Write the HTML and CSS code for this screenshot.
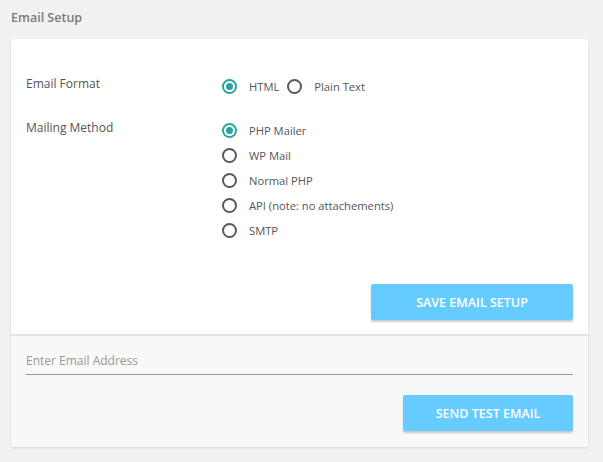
FILE: index.html
```html
<!DOCTYPE html>
<html>
<head>
<meta charset="utf-8">
<link rel="stylesheet" href="styles.css">
</head>
<body>
<div class="page">
  <h2 class="title">Email Setup</h2>
  <div class="card">
    <div class="top">
      <div class="row">
        <div class="label">Email Format</div>
        <div class="options inline">
          <label class="opt"><span class="radio checked"></span>HTML</label>
          <label class="opt"><span class="radio"></span>Plain Text</label>
        </div>
      </div>
      <div class="row row2">
        <div class="label">Mailing Method</div>
        <div class="options stack">
          <label class="opt"><span class="radio checked"></span>PHP Mailer</label>
          <label class="opt"><span class="radio"></span>WP Mail</label>
          <label class="opt"><span class="radio"></span>Normal PHP</label>
          <label class="opt"><span class="radio"></span>API (note: no attachements)</label>
          <label class="opt"><span class="radio"></span>SMTP</label>
        </div>
      </div>
      <div class="actions">
        <button class="btn save">SAVE EMAIL SETUP</button>
      </div>
    </div>
    <div class="bottom">
      <div class="input">Enter Email Address</div>
      <div class="actions">
        <button class="btn send">SEND TEST EMAIL</button>
      </div>
    </div>
  </div>
</div>
</body>
</html>
```
FILE: styles.css
```css
* { box-sizing: border-box; }
html, body { margin: 0; padding: 0; }
body {
  background: #f1f1f1;
  font-family: "Open Sans", "Noto Sans", sans-serif;
  font-size: 12px;
  color: #555;
  width: 603px;
  height: 462px;
  overflow: hidden;
}
.page { padding: 8px 15px 0 11px; }
.title {
  margin: 0;
  font-size: 12.5px;
  font-weight: 600;
  color: #7a7a7a;
  line-height: 20px;
  height: 31px;
}
.card {
  background: #fff;
  width: 577px;
  box-shadow: 0 1px 2px rgba(0,0,0,0.12);
}
.top { padding: 36px 15px 14px 15px; }
.row { display: flex; }
.row2 { margin-top: 24px; }
.label {
  width: 196px;
  line-height: 18px;
  margin-top: 0;
  color: #555;
}
.options.inline { display: flex; gap: 8px; margin-top: 2px; }
.options.stack { display: flex; flex-direction: column; gap: 7px; margin-top: 2px; }
.opt {
  display: flex;
  align-items: center;
  height: 18px;
  font-size: 11.2px;
  color: #555;
}
.radio {
  width: 15px;
  height: 15px;
  border: 2px solid #5a5a5a;
  border-radius: 50%;
  margin-right: 12px;
  position: relative;
  flex: none;
}
.radio.checked { border-color: #26a69a; }
.radio.checked::after {
  content: "";
  position: absolute;
  left: 2px; top: 2px;
  width: 7px; height: 7px;
  border-radius: 50%;
  background: #26a69a;
}
.actions { display: flex; justify-content: flex-end; }
.top .actions { margin-top: 45px; }
.btn {
  background: #66ccff;
  color: #fff;
  border: none;
  border-radius: 2px;
  height: 36px;
  font-family: "Open Sans", "Noto Sans", sans-serif;
  font-size: 12.5px;
  font-weight: 600;
  box-shadow: 0 2px 2px rgba(0,0,0,0.2);
  padding: 0;
}
.save { width: 202px; }
.send { width: 170px; }
.bottom {
  background: #f8f8f8;
  border-top: 2px solid #e4e4e4;
  padding: 15px 15px 16px 15px;
}
.input {
  height: 24px;
  line-height: 20px;
  border-bottom: 1px solid #999;
  color: #999;
  font-size: 12px;
}
.bottom .actions { margin-top: 20px; }
```
